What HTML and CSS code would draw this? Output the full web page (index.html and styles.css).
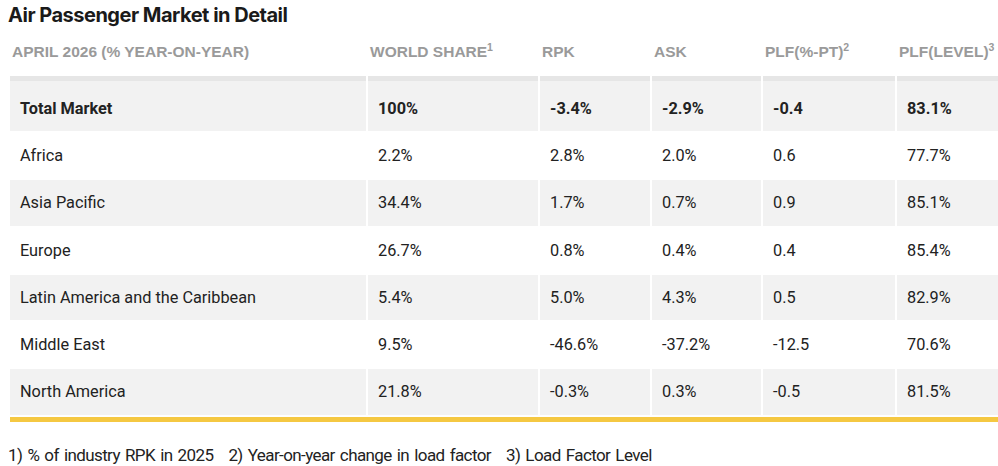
FILE: index.html
```html
<!DOCTYPE html>
<html lang="en">
<head>
<meta charset="utf-8">
<title>Air Passenger Market in Detail</title>
<link rel="stylesheet" href="styles.css">
</head>
<body>
<div class="page">
  <h2 class="title">Air Passenger Market in Detail</h2>
  <table class="market">
    <colgroup>
      <col class="c1"><col class="c2"><col class="c3"><col class="c4"><col class="c5"><col class="c6">
    </colgroup>
    <thead>
      <tr>
        <th>APRIL 2026 (% YEAR-ON-YEAR)</th>
        <th>WORLD SHARE<sup>1</sup></th>
        <th>RPK</th>
        <th>ASK</th>
        <th>PLF(%-PT)<sup>2</sup></th>
        <th>PLF(LEVEL)<sup>3</sup></th>
      </tr>
    </thead>
    <tbody>
      <tr class="total shade"><td>Total Market</td><td>100%</td><td>-3.4%</td><td>-2.9%</td><td>-0.4</td><td>83.1%</td></tr>
      <tr><td>Africa</td><td>2.2%</td><td>2.8%</td><td>2.0%</td><td>0.6</td><td>77.7%</td></tr>
      <tr class="shade"><td>Asia Pacific</td><td>34.4%</td><td>1.7%</td><td>0.7%</td><td>0.9</td><td>85.1%</td></tr>
      <tr><td>Europe</td><td>26.7%</td><td>0.8%</td><td>0.4%</td><td>0.4</td><td>85.4%</td></tr>
      <tr class="shade"><td>Latin America and the Caribbean</td><td>5.4%</td><td>5.0%</td><td>4.3%</td><td>0.5</td><td>82.9%</td></tr>
      <tr><td>Middle East</td><td>9.5%</td><td>-46.6%</td><td>-37.2%</td><td>-12.5</td><td>70.6%</td></tr>
      <tr class="shade"><td>North America</td><td>21.8%</td><td>-0.3%</td><td>0.3%</td><td>-0.5</td><td>81.5%</td></tr>
    </tbody>
  </table>
  <div class="rule"></div>
  <p class="notes"><span>1) % of industry RPK in 2025</span><span>2) Year-on-year change in load factor</span><span>3) Load Factor Level</span></p>
</div>
</body>
</html>
```
FILE: styles.css
```css
html, body {
  margin: 0;
  padding: 0;
  background: #ffffff;
}
body {
  font-family: Roboto, "Liberation Sans", Arial, sans-serif;
  color: #222222;
  overflow: hidden;
}
.page {
  width: 1000px;
  padding: 0 0 0 8px;
}
.title {
  margin: 0;
  padding-top: 2px;
  font-family: Inter, Roboto, sans-serif;
  font-size: 20px;
  font-weight: 700;
  line-height: 26px;
  letter-spacing: -0.5px;
  color: #1a1a1a;
}
.market {
  margin-left: 0;
  width: 992px;
  table-layout: fixed;
  border-collapse: separate;
  border-spacing: 2px;
  font-size: 16.3px;
}
.c1 { width: 356px; }
.c2 { width: 170px; }
.c3 { width: 110px; }
.c4 { width: 109px; }
.c5 { width: 132px; }
.c6 { width: 103px; }
.market th {
  text-align: left;
  padding: 0 2px;
  height: 44px;
  font-family: "Liberation Sans", Arial, sans-serif;
  font-size: 15.5px;
  font-weight: 700;
  color: #9a9a9a;
  vertical-align: middle;
}
.market th sup {
  font-size: 10.5px;
  vertical-align: 6px;
  line-height: 0;
}
.market td {
  padding: 0 10px;
  height: 45.25px;
  vertical-align: middle;
  white-space: nowrap;
}
.market tr.shade td {
  background: #f2f2f2;
}
.market tr.total td {
  font-weight: 700;
  border-top: 5px solid #e6e6e6;
  padding-top: 5px;
  height: 45px;
}
.rule {
  width: 990px;
  margin-left: 2px;
  height: 5px;
  background: #f5c842;
}
.notes {
  margin: 23px 0 0 0;
  font-size: 17px;
  color: #222222;
  display: flex;
  gap: 15px;
  letter-spacing: -0.6px;
  word-spacing: 1.5px;
}
```
